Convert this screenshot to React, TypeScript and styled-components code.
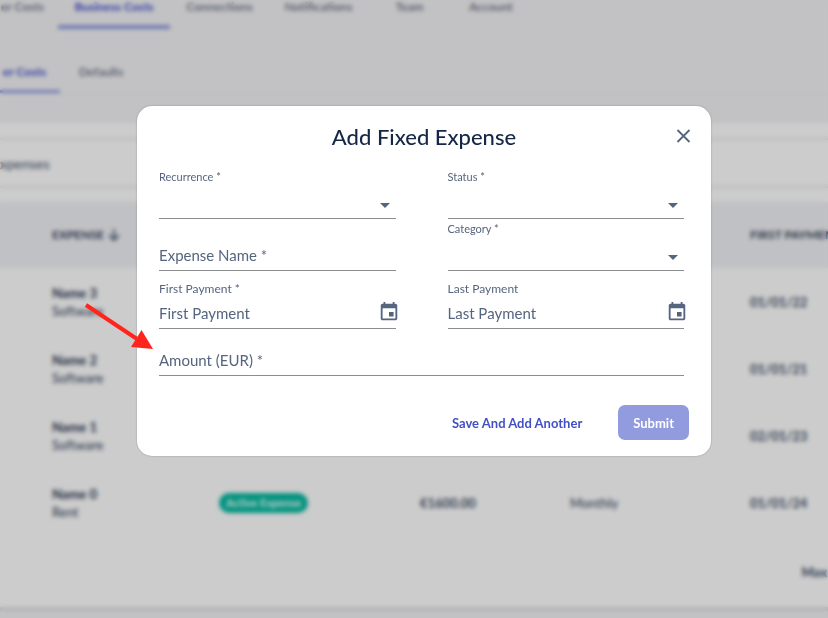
import React from "react";
import styled, { createGlobalStyle } from "styled-components";

const GlobalStyle = createGlobalStyle`
  * { box-sizing: border-box; }
  body {
    margin: 0;
    overflow: hidden;
    background: #f3f3f5;
    color: #44506a;
    font-family: Lato, "Open Sans", sans-serif;
  }
  button, input, select { font: inherit; color: inherit; }
`;

/* ---------- Page behind the dialog ---------- */

const Page = styled.div`
  min-height: 100vh;
  overflow: hidden;
`;

const TabBar = styled.nav<{ $divider?: boolean }>`
  display: flex;
  height: ${(p) => (p.$divider ? 64 : 30)}px;
  border-bottom: 1px solid ${(p) => (p.$divider ? "#eaecf3" : "transparent")};
`;

const Tab = styled.a<{ $width: number; $active?: boolean; $line?: number; $end?: boolean }>`
  display: flex;
  flex: none;
  align-items: flex-end;
  justify-content: ${(p) => (p.$end ? "flex-end" : "center")};
  width: ${(p) => p.$width}px;
  padding: 0 ${(p) => (p.$end ? 14 : 0)}px 11px;
  border-bottom: ${(p) => p.$line ?? 4}px solid ${(p) => (p.$active ? "#8f98e0" : "transparent")};
  color: ${(p) => (p.$active ? "#4552cf" : "#5b6478")};
  font-size: 12px;
  font-weight: ${(p) => (p.$active ? 700 : 500)};
  line-height: 14px;
  text-decoration: none;
  white-space: nowrap;
`;

const Card = styled.main`
  margin-top: 28px;
  padding-top: 15px;
  background: #fff;
  border-top: 1px solid #f0f1f3;
  border-bottom: 4px solid #e2e2e6;
`;

const SearchRow = styled.div`
  display: flex;
  align-items: center;
  height: 50px;
  border-top: 2px solid #eaeaea;
  border-bottom: 2px solid #eaeaea;
  font-size: 14px;
`;

const Table = styled.table`
  width: 100%;
  margin-top: 14px;
  border-collapse: collapse;
  table-layout: fixed;
  font-size: 13px;
  line-height: 18px;
  white-space: nowrap;
`;

const Col = styled.col<{ $width?: number }>`
  width: ${(p) => (p.$width ? `${p.$width}px` : "auto")};
`;

const HeadCell = styled.th`
  height: 66px;
  padding: 0;
  background: #f1f2f5;
  color: #36405a;
  font-size: 12px;
  text-align: left;
  &:first-child { padding-left: 52px; }
`;

const HeadLabel = styled.span`
  display: flex;
  align-items: center;
  gap: 4px;
`;

const Cell = styled.td<{ $bold?: boolean }>`
  height: 67px;
  padding: 0;
  font-weight: ${(p) => (p.$bold ? 700 : 500)};
  &:first-child { padding-left: 52px; }
`;

const Name = styled.div`
  color: #2f3a54;
  font-weight: 700;
`;

const Badge = styled.span`
  display: inline-block;
  padding: 0 7px;
  border-radius: 10px;
  background: #03b99f;
  color: #e8fffa;
  font-size: 11px;
  font-weight: 700;
  line-height: 20px;
`;

const TableFooter = styled.div`
  display: flex;
  justify-content: flex-end;
  padding: 27px 1px 26px;
  font-size: 13px;
  font-weight: 700;
  line-height: 18px;
`;

/* ---------- Dialog ---------- */

const Backdrop = styled.div`
  position: fixed;
  inset: 0;
  display: flex;
  align-items: flex-start;
  justify-content: center;
  padding: 106px 117px 0 137px;
  background: rgba(0, 0, 0, 0.2);
  backdrop-filter: blur(2px);
`;

const Dialog = styled.section`
  width: 100%;
  max-width: 720px;
  padding: 0 22px 16px;
  border-radius: 15px;
  background: #fff;
  box-shadow: 0 0 2px rgba(0, 0, 0, 0.3);
  color: #56657f;
`;

const DialogHeader = styled.header`
  display: grid;
  grid-template-columns: 1fr auto 1fr;
  align-items: center;
  height: 61px;
`;

const Title = styled.h2`
  grid-column: 2;
  margin: 0;
  color: #152746;
  font-size: 22px;
  font-weight: 500;
  line-height: 30px;
`;

const IconButton = styled.button`
  display: flex;
  flex: none;
  padding: 0;
  border: 0;
  background: none;
  cursor: pointer;
`;

const CloseButton = styled(IconButton)`
  justify-self: end;
  margin-right: -6px;
`;

const Form = styled.form`
  display: grid;
`;

const Fields = styled.div`
  display: grid;
  grid-template-columns: 1fr 1fr;
  column-gap: 52px;
  padding-right: 5px;
`;

const Field = styled.div<{ $height: number; $wide?: boolean }>`
  display: flex;
  flex-direction: column;
  justify-content: flex-end;
  min-width: 0;
  height: ${(p) => p.$height}px;
  grid-column: ${(p) => (p.$wide ? "1 / -1" : "auto")};
`;

const Label = styled.label<{ $large?: boolean }>`
  margin-bottom: ${(p) => (p.$large ? 1 : 3)}px;
  font-size: ${(p) => (p.$large ? 12 : 11)}px;
  line-height: 16px;
`;

const Control = styled.div`
  display: flex;
  align-items: center;
  height: 31px;
  border-bottom: 1px solid #8d8d90;
`;

const Input = styled.input`
  flex: 1;
  min-width: 0;
  height: 28px;
  padding: 0;
  border: 0;
  outline: 0;
  background: none;
  font-size: 15px;
  &::placeholder { color: #56657f; opacity: 1; }
`;

const Select = styled.select`
  flex: 1;
  min-width: 0;
  height: 28px;
  border: 0;
  outline: 0;
  background: none;
  appearance: none;
`;

const Caret = styled.svg`
  flex: none;
  margin: 4px 6px 0 0;
`;

const CalendarButton = styled(IconButton)`
  margin: 0 -4px 2px 0;
`;

const Actions = styled.footer`
  display: flex;
  align-items: center;
  justify-content: flex-end;
  gap: 21px;
  margin-top: 29px;
`;

const Button = styled.button<{ $primary?: boolean }>`
  height: 35px;
  padding: 0 15px;
  border: 0;
  border-radius: 7px;
  background: ${(p) => (p.$primary ? "#929bdd" : "transparent")};
  color: ${(p) => (p.$primary ? "#fff" : "#4250c8")};
  font-size: 13px;
  font-weight: 700;
`;

const Pointer = styled.svg`
  position: fixed;
  top: 300px;
  left: 80px;
  pointer-events: none;
`;

const rows = [
  { name: "Name 3", type: "Software", date: "01/01/22" },
  { name: "Name 2", type: "Software", date: "01/01/21" },
  { name: "Name 1", type: "Software", date: "02/01/23" },
  { name: "Name 0", type: "Rent", date: "01/01/24", status: "Active Expense", amount: "€1600.00", recurrence: "Monthly" },
];

function SelectField({ id, label }: { id: string; label: string }) {
  return (
    <Field $height={52}>
      <Label htmlFor={id}>{label}</Label>
      <Control>
        <Select id={id} defaultValue="">
          <option value="" />
        </Select>
        <Caret width="10" height="5" viewBox="0 0 10 5" aria-hidden="true">
          <path d="M0 0h10L5 5z" fill="#56657f" />
        </Caret>
      </Control>
    </Field>
  );
}

function TextField({ label, height, wide }: { label: string; height: number; wide?: boolean }) {
  return (
    <Field $height={height} $wide={wide}>
      <Control>
        <Input aria-label={label} placeholder={label} />
      </Control>
    </Field>
  );
}

function DateField({ id, label, placeholder }: { id: string; label: string; placeholder: string }) {
  return (
    <Field $height={58}>
      <Label htmlFor={id} $large>{label}</Label>
      <Control>
        <Input id={id} placeholder={placeholder} />
        <CalendarButton type="button" aria-label={`Choose ${placeholder}`}>
          <svg width="22" height="22" viewBox="0 0 24 24" fill="#56657f">
            <path d="M17 12h-5v5h5v-5zM16 1v2H8V1H6v2H5c-1.110 0-1.990.9-1.990 2L3 19c0 1.100.89 2 2 2h14c1.100 0 2-.9 2-2V5c0-1.100-.9-2-2-2h-1V1h-2zm3 18H5V8h14v11z" />
          </svg>
        </CalendarButton>
      </Control>
    </Field>
  );
}

export default function App() {
  return (
    <>
      <GlobalStyle />
      <Page>
        <TabBar>
          <Tab href="#costs" $width={58} $end>er Costs</Tab>
          <Tab href="#business" $width={112} $active>Business Costs</Tab>
          <Tab href="#connections" $width={99}>Connections</Tab>
          <Tab href="#notifications" $width={99}>Notifications</Tab>
          <Tab href="#team" $width={83}>Team</Tab>
          <Tab href="#account" $width={80}>Account</Tab>
        </TabBar>
        <TabBar $divider>
          <Tab href="#other" $width={60} $line={3} $active $end>er Costs</Tab>
          <Tab href="#defaults" $width={82} $line={3}>Defaults</Tab>
        </TabBar>
        <Card>
          <SearchRow>xpenses</SearchRow>
          <Table>
            <colgroup>
              <Col $width={219} />
              <Col $width={201} />
              <Col $width={150} />
              <Col $width={180} />
              <Col />
            </colgroup>
            <thead>
              <tr>
                <HeadCell>
                  <HeadLabel>
                    EXPENSE
                    <svg width="12" height="14" viewBox="0 0 12 14" fill="none" stroke="#56657f" strokeWidth="2" aria-hidden="true">
                      <path d="M6 1v11M1 7l5 5 5-5" />
                    </svg>
                  </HeadLabel>
                </HeadCell>
                <HeadCell />
                <HeadCell />
                <HeadCell />
                <HeadCell>FIRST PAYMENT</HeadCell>
              </tr>
            </thead>
            <tbody>
              {rows.map((row) => (
                <tr key={row.name}>
                  <Cell>
                    <Name>{row.name}</Name>
                    {row.type}
                  </Cell>
                  <Cell>{row.status && <Badge>{row.status}</Badge>}</Cell>
                  <Cell $bold>{row.amount}</Cell>
                  <Cell>{row.recurrence}</Cell>
                  <Cell $bold>{row.date}</Cell>
                </tr>
              ))}
            </tbody>
          </Table>
          <TableFooter>Max</TableFooter>
        </Card>
      </Page>

      <Backdrop>
        <Dialog role="dialog" aria-modal="true" aria-labelledby="dialog-title">
          <DialogHeader>
            <Title id="dialog-title">Add Fixed Expense</Title>
            <CloseButton type="button" aria-label="Close">
              <svg width="23" height="23" viewBox="0 0 23 23" fill="none" stroke="#56657f" strokeWidth="1.800">
                <path d="M5.500 5l12 12M17.500 5l-12 12" />
              </svg>
            </CloseButton>
          </DialogHeader>
          <Form>
            <Fields>
              <SelectField id="recurrence" label="Recurrence *" />
              <SelectField id="status" label="Status *" />
              <TextField label="Expense Name *" height={52} />
              <SelectField id="category" label="Category *" />
              <DateField id="first-payment" label="First Payment *" placeholder="First Payment" />
              <DateField id="last-payment" label="Last Payment" placeholder="Last Payment" />
              <TextField label="Amount (EUR) *" height={47} wide />
            </Fields>
            <Actions>
              <Button type="button">Save And Add Another</Button>
              <Button type="submit" $primary>Submit</Button>
            </Actions>
          </Form>
        </Dialog>
      </Backdrop>

      <Pointer width="80" height="56" viewBox="0 0 80 56" aria-hidden="true">
        <path d="M6 5l51 34" stroke="#ff251d" strokeWidth="4" />
        <path d="M73 49l-22-2 10.500-17z" fill="#ff251d" />
      </Pointer>
    </>
  );
}
